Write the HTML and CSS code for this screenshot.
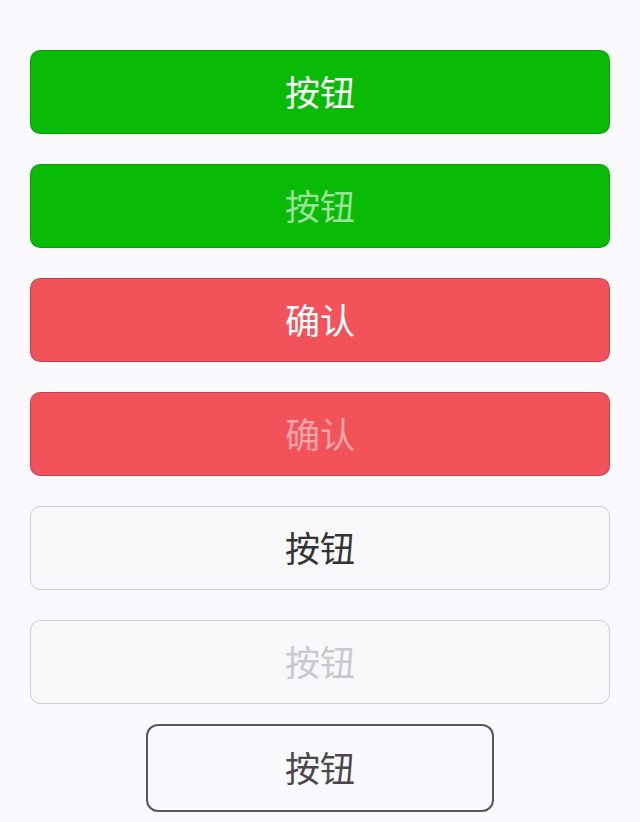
FILE: index.html
```html
<!DOCTYPE html>
<html lang="zh-CN">
<head>
    <meta charset="UTF-8">
    <meta name="viewport" content="width=device-width, initial-scale=1.0">
    <title>按钮</title>
    <link rel="stylesheet" href="styles.css">
</head>
<body>
    <div class="page">
        <a class="btn btn-primary">按钮</a>
        <a class="btn btn-primary btn-disabled">按钮</a>
        <a class="btn btn-warn">确认</a>
        <a class="btn btn-warn btn-disabled">确认</a>
        <a class="btn btn-default">按钮</a>
        <a class="btn btn-default btn-disabled">按钮</a>
        <div class="plain-wrap">
            <a class="btn-plain">按钮</a>
        </div>
    </div>
</body>
</html>
```

FILE: styles.css
```css
body {
    margin: 0;
    background: #faf9fd;
    font-family: "Noto Sans CJK SC", "DejaVu Sans", sans-serif;
}
.page {
    padding: 50px 30px 0;
}
.btn {
    display: flex;
    align-items: center;
    justify-content: center;
    box-sizing: border-box;
    height: 84px;
    padding-bottom: 3px;
    margin-bottom: 30px;
    border-radius: 10px;
    border: 1px solid rgba(0, 0, 0, 0.15);
    font-size: 35px;
    color: #fff;
}
.btn-primary {
    background: #09bb07;
}
.btn-primary.btn-disabled {
    color: #9be29a;
}
.btn-warn {
    background: #f2535a;
    border-color: rgba(0, 0, 0, 0.2);
}
.btn-warn.btn-disabled {
    color: #f8a6a9;
}
.btn-default {
    background: #f8f7fa;
    border-color: #cfcdd2;
    color: #333;
}
.btn-default.btn-disabled {
    color: #c9c8cc;
    margin-bottom: 20px;
}
.plain-wrap {
    display: flex;
    justify-content: center;
}
.btn-plain {
    display: flex;
    align-items: center;
    justify-content: center;
    box-sizing: border-box;
    width: 348px;
    height: 88px;
    padding-bottom: 3px;
    border: 2px solid #59575c;
    border-radius: 12px;
    font-size: 35px;
    color: #4a484c;
}
```
